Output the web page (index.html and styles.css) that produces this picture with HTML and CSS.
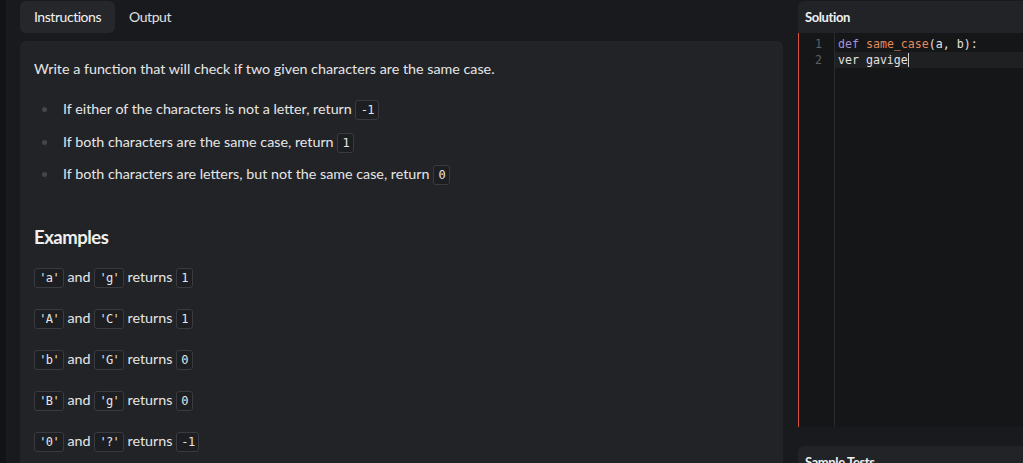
FILE: index.html
```html
<!DOCTYPE html>
<html>
<head>
<meta charset="utf-8">
<link rel="stylesheet" href="styles.css">
</head>
<body>
<div class="app">
  <div class="rail"></div>
  <div class="left">
    <div class="tabs">
      <div class="tab active">Instructions</div>
      <div class="tab">Output</div>
    </div>
    <div class="panel">
      <p class="intro">Write a function that will check if two given characters are the same case.</p>
      <ul class="rules">
        <li>If either of the characters is not a letter, return <code>-1</code></li>
        <li>If both characters are the same case, return <code>1</code></li>
        <li>If both characters are letters, but not the same case, return <code>0</code></li>
      </ul>
      <h2 class="heading">Examples</h2>
      <p class="ex"><code>'a'</code> and <code>'g'</code> returns <code>1</code></p>
      <p class="ex"><code>'A'</code> and <code>'C'</code> returns <code>1</code></p>
      <p class="ex"><code>'b'</code> and <code>'G'</code> returns <code>0</code></p>
      <p class="ex"><code>'B'</code> and <code>'g'</code> returns <code>0</code></p>
      <p class="ex"><code>'0'</code> and <code>'?'</code> returns <code>-1</code></p>
    </div>
  </div>
  <div class="right">
    <div class="sol-head">Solution</div>
    <div class="editor">
      <div class="gutter">
        <div class="ln">1</div>
        <div class="ln">2</div>
      </div>
      <div class="code">
        <div class="line"><span class="kw">def</span> <span class="fn">same_case</span>(a, b):</div>
        <div class="line current">ver gavige<span class="cursor"></span></div>
      </div>
    </div>
    <div class="tests">
      <div class="tests-head">Sample Tests</div>
    </div>
  </div>
</div>
</body>
</html>
```

FILE: styles.css
```css
html, body {
  margin: 0;
  padding: 0;
  height: 100%;
  overflow: hidden;
}
body {
  background: #191a1d;
  color: #e6e6e6;
  font-family: Lato, "Open Sans", sans-serif;
  font-size: 14.3px;
}
.app {
  display: flex;
  height: 463px;
  overflow: hidden;
}
.rail {
  width: 6px;
  flex: none;
  background: #121316;
}
.left {
  width: 763px;
  flex: none;
  margin-left: 14px;
  display: flex;
  flex-direction: column;
}
.tabs {
  display: flex;
  margin-top: 1px;
  height: 32px;
}
.tab {
  padding: 0 14px;
  line-height: 32px;
  font-size: 14px;
  color: #e0e0e0;
  border-radius: 6px;
  letter-spacing: -0.45px;
}
.tab.active {
  background: #26272b;
  color: #f2f2f2;
}
.panel {
  margin-top: 8px;
  flex: 1;
  background: #222327;
  border-radius: 6px 6px 0 0;
  padding: 18px 14px 0 14px;
}
.intro {
  margin: 0;
  line-height: 20px;
}
.rules {
  list-style: none;
  margin: 20px 0 0 0;
  padding: 0;
}
.rules li {
  position: relative;
  padding-left: 29px;
  line-height: 20px;
  margin-bottom: 12.5px;
}
.rules li::before {
  content: "";
  position: absolute;
  left: 8px;
  top: 8px;
  width: 5px;
  height: 5px;
  border-radius: 50%;
  background: #45464b;
}
code {
  font-family: "DejaVu Sans Mono", monospace;
  font-size: 12px;
  letter-spacing: -0.65px;
  line-height: 1;
  background: #1d1e22;
  border: 1px solid #3a3b40;
  border-radius: 3px;
  padding: 3px 3.7px 3px 4.3px;
  color: #e6e6e6;
  display: inline-block;
  vertical-align: 0;
  margin: -4px 0;
}
.heading {
  margin: 41px 0 0 0;
  font-size: 18.5px;
  font-weight: 700;
  line-height: 24px;
  letter-spacing: -0.5px;
  color: #f0f0f0;
}
.ex {
  margin: 18px 0 0 0;
  line-height: 20px;
}
.ex + .ex {
  margin-top: 21px;
}
.right {
  margin-left: 15px;
  width: 240px;
  flex: none;
  display: flex;
  flex-direction: column;
}
.sol-head {
  margin-top: 1px;
  height: 32px;
  flex: none;
  line-height: 32px;
  background: #222327;
  border-radius: 6px 0 0 0;
  padding-left: 7px;
  font-size: 13px;
  font-weight: 700;
  letter-spacing: -0.4px;
  color: #f0f0f0;
}
.editor {
  height: 394px;
  flex: none;
  background: #151617;
  border-left: 1px solid #d9533f;
  display: flex;
  font-family: "DejaVu Sans Mono", monospace;
  font-size: 11.6px;
  padding-top: 3px;
  box-sizing: border-box;
}
.gutter {
  width: 36px;
  flex: none;
  border-right: 1px solid #2a2b2e;
  color: #5f6064;
  text-align: right;
  box-sizing: border-box;
  padding-right: 12px;
  margin-top: -3px;
  padding-top: 3px;
}
.ln {
  line-height: 16px;
}
.code {
  flex: 1;
  color: #e2e2e2;
}
.line {
  line-height: 16px;
  padding-left: 3px;
  white-space: pre;
}
.line.current {
  background: #1f2021;
}
.kw {
  color: #a490d6;
}
.fn {
  color: #e3895a;
}
.cursor {
  display: inline-block;
  width: 1px;
  height: 14px;
  background: #d0d0d0;
  vertical-align: -3px;
}
.tests {
  margin-top: 19px;
  flex: none;
  height: 40px;
  background: #222327;
  border-radius: 6px 0 0 0;
}
.tests-head {
  padding: 8px 0 0 7px;
  font-size: 13px;
  font-weight: 700;
  letter-spacing: -0.4px;
  color: #f0f0f0;
}
```
